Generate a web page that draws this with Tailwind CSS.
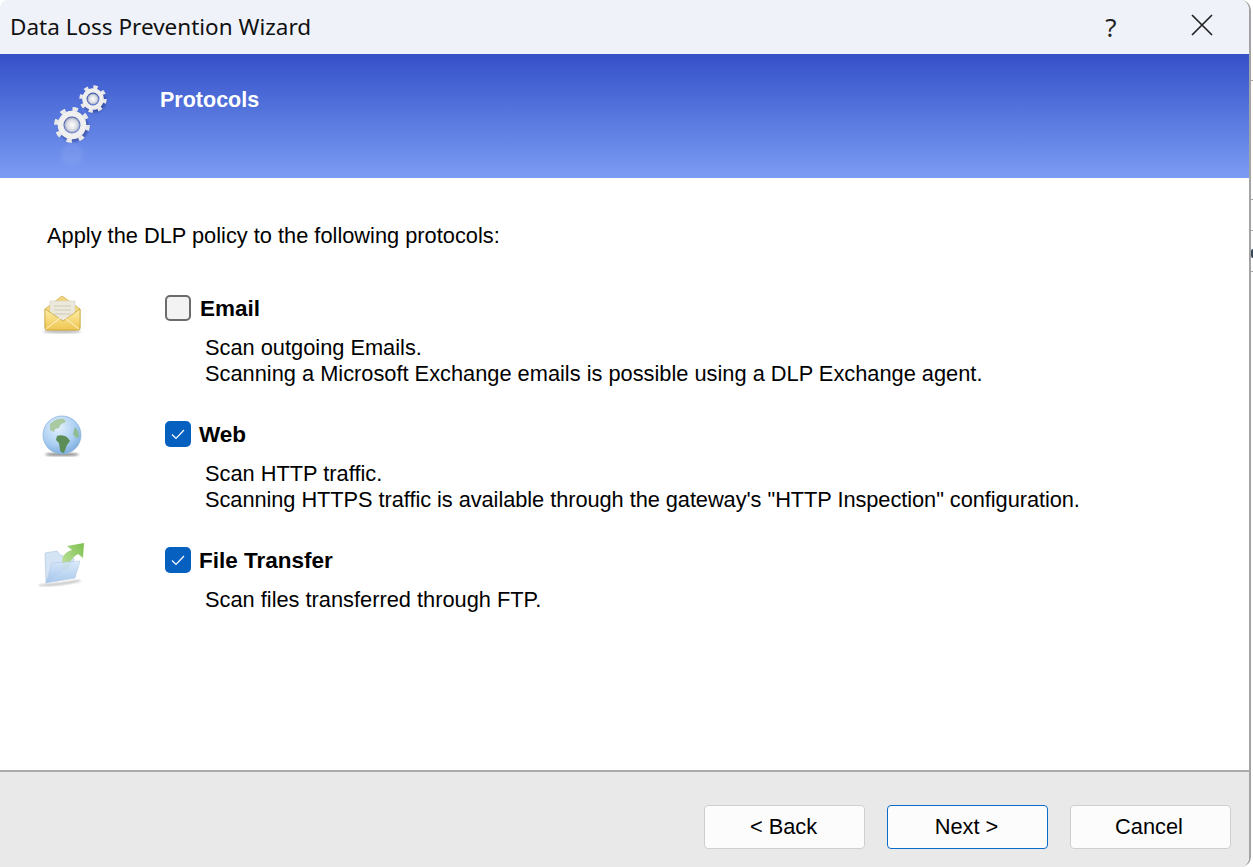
<!DOCTYPE html>
<html lang="en">
<head>
<meta charset="UTF-8">
<title>Data Loss Prevention Wizard</title>
<script src="https://cdn.jsdelivr.net/npm/@tailwindcss/browser@4"></script>
</head>
<body class="bg-white overflow-hidden">
<div class="relative w-[1253px] h-[867px] font-['Liberation_Sans',sans-serif] text-black">
  <!-- bits of the window behind the dialog -->
  <div class="absolute right-0 top-[80px] w-[3px] h-px bg-[#a8a8a8]"></div>
  <div class="absolute right-0 top-[199px] w-[3px] h-px bg-[#a8a8a8]"></div>
  <div class="absolute right-0 top-[230px] w-[3px] h-px bg-[#a8a8a8]"></div>
  <div class="absolute right-0 top-[271px] w-[3px] h-px bg-[#a8a8a8]"></div>
  <div class="absolute right-0 top-[249px] w-[2px] h-[9px] rounded-l-[2px] bg-[#3a4a5c]"></div>

  <div class="relative flex flex-col w-[1251px] h-[867px] overflow-hidden rounded-tl-[8px] rounded-tr-[10px] rounded-br-[10px] border-r-2 border-[#a3a3a3] bg-white">
    <!-- title bar -->
    <div class="flex items-center h-[54px] pl-[10px] bg-[#eff2f9]">
      <span class="flex-1 font-['Noto_Sans',sans-serif] text-[22.5px] leading-[54px] text-[#111]">Data Loss Prevention Wizard</span>
      <span class="w-[24px] text-center font-['Noto_Sans',sans-serif] text-[26px] leading-[50px] text-[#222]">?</span>
      <svg class="ml-[68px] mr-[36px] mb-[4px]" width="22" height="22" viewBox="0 0 22 22" fill="none" stroke="#222" stroke-width="1.7"><path d="M1 1l20 20M21 1L1 21"/></svg>
    </div>

    <!-- banner -->
    <div class="flex h-[124px] bg-gradient-to-b from-[#3650c8] to-[#7c9cf3]">
      <svg class="ml-[48px] mt-[28px]" width="64" height="92" viewBox="0 0 64 92">
        <defs>
          <radialGradient id="hub"><stop offset="0" stop-color="#fff"/><stop offset=".7" stop-color="#d8dae2"/><stop offset="1" stop-color="#8f98b8"/></radialGradient>
          <filter id="soft"><feGaussianBlur stdDeviation="2"/></filter>
          <filter id="gearShadow"><feGaussianBlur stdDeviation="1"/></filter>
        </defs>
        <circle cx="24" cy="72" r="11" fill="#fff" opacity=".07" filter="url(#soft)"/>
        <g opacity=".5" transform="translate(1.5 2)" filter="url(#gearShadow)">
          <circle cx="45" cy="17" r="9" fill="none" stroke="#26367f" stroke-width="5"/>
          <circle cx="24" cy="43" r="12" fill="none" stroke="#26367f" stroke-width="6"/>
        </g>
        <circle cx="45" cy="17" r="12" fill="none" stroke="#e8e8e8" stroke-width="3.4" stroke-dasharray="4.3 5.12"/>
        <circle cx="45" cy="17" r="8.6" fill="none" stroke="#eeeeee" stroke-width="4.4"/>
        <circle cx="45" cy="17" r="5.6" fill="url(#hub)"/>
        <circle cx="24" cy="43" r="16" fill="none" stroke="#e8e8e8" stroke-width="3.8" stroke-dasharray="5.4 7.17"/>
        <circle cx="24" cy="43" r="11.4" fill="none" stroke="#f0f0f0" stroke-width="5.8"/>
        <circle cx="24" cy="43" r="7.8" fill="url(#hub)"/>
      </svg>
      <span class="ml-[48px] mt-[34px] text-[21.5px] leading-6 font-bold text-white">Protocols</span>
    </div>

    <!-- content -->
    <div class="flex-1 pt-[46px] pl-[47px]">
      <p class="text-[21.8px] leading-6">Apply the DLP policy to the following protocols:</p>

      <div class="mt-[49px] flex flex-col">
        <!-- email -->
        <div class="flex h-[126px]">
          <div class="w-[118px] shrink-0">
            <svg class="-ml-[5px] -mt-[3px] w-[42px] h-[42px]" viewBox="0 0 42 42">
              <defs>
                <linearGradient id="env" x1="0" y1="0" x2="0" y2="1"><stop offset="0" stop-color="#ffefa8"/><stop offset="1" stop-color="#eec550"/></linearGradient>
                <filter id="shade"><feGaussianBlur stdDeviation="1.2"/></filter>
              </defs>
              <ellipse cx="20" cy="37.5" rx="19" ry="1.8" fill="#bbb" filter="url(#shade)"/>
              <path d="M3 15L20 2l18 13v19q0 2-2 2H5q-2 0-2-2z" fill="#f3d77e" stroke="#cfae4c" stroke-width=".8"/>
              <path d="M8 7h25v16l-12 6-13-6z" fill="#ece9dc" stroke="#d4d0c0" stroke-width=".6"/>
              <path d="M12 12h17M12 16h17M12 20h17" stroke="#cfcbb8" stroke-width="1"/>
              <path d="M3 15l18 12 17-12v19q0 2-2 2H5q-2 0-2-2z" fill="url(#env)" stroke="#c9a63f" stroke-width=".8"/>
              <path d="M4 35l14-11M37 35L23 24" stroke="#fff6d0" stroke-width="1"/>
            </svg>
          </div>
          <div class="flex flex-col">
            <label class="flex items-center h-[26px] -mt-[2px]">
              <span class="w-[26px] h-[26px] rounded-[5px] border-2 border-[#6b6b6b] bg-[#f3f3f3]"></span>
              <span class="ml-[9px] mt-[2px] text-[22.5px] font-bold">Email</span>
            </label>
            <p class="mt-[14px] ml-[40px] text-[21.8px] leading-[26px]">Scan outgoing Emails.<br>Scanning a Microsoft Exchange emails is possible using a DLP Exchange agent.</p>
          </div>
        </div>

        <!-- web -->
        <div class="flex h-[126px]">
          <div class="w-[118px] shrink-0">
            <svg class="-ml-[6px] -mt-[8px] w-[42px] h-[42px] overflow-visible" viewBox="0 0 42 42">
              <defs>
                <radialGradient id="globe" cx=".4" cy=".3" r=".8"><stop offset="0" stop-color="#e4f1fd"/><stop offset=".6" stop-color="#a9cdf1"/><stop offset="1" stop-color="#6fa3d8"/></radialGradient>
              </defs>
              <ellipse cx="21" cy="39.5" rx="17" ry="1.6" fill="#888" filter="url(#shade)"/>
              <circle cx="21" cy="20" r="19" fill="url(#globe)" stroke="#8fb6da" stroke-width=".8"/>
              <path d="M9 9q6-6 14-5l2 3-5 2-2 4-4 1-1 3-4-2z" fill="#a9c9a0"/>
              <path d="M16 21q5-2 10 1l3 4-3 4-3 8q-3 0-4-3l-1-7-3-3z" fill="#5d8d56"/>
              <path d="M34 12q4 4 4 10l-3 1-3-4z" fill="#8fbc93"/>
            </svg>
          </div>
          <div class="flex flex-col">
            <label class="flex items-center h-[26px] -mt-[2px]">
              <span class="flex items-center justify-center w-[26px] h-[26px] rounded-[5px] bg-[#0560bf]">
                <svg width="14" height="11" viewBox="0 0 14 11" fill="none" stroke="#fff" stroke-width="1.2"><path d="M1 5.5L5 9.5L13 1"/></svg>
              </span>
              <span class="ml-[8px] mt-[2px] text-[22.5px] font-bold">Web</span>
            </label>
            <p class="mt-[14px] ml-[40px] text-[21.8px] leading-[26px]">Scan HTTP traffic.<br><span class="tracking-[-0.06px]">Scanning HTTPS traffic is available through the gateway's "HTTP Inspection" configuration.</span></p>
          </div>
        </div>

        <!-- file transfer -->
        <div class="flex h-[126px]">
          <div class="w-[118px] shrink-0">
            <svg class="-ml-[10px] -mt-[9px] w-[50px] h-[48px]" viewBox="0 0 50 48">
              <defs>
                <linearGradient id="fold" x1="0" y1="0" x2="0" y2="1"><stop offset="0" stop-color="#d6e7fa"/><stop offset="1" stop-color="#9cc0ea"/></linearGradient>
                <linearGradient id="arrow" x1="0" y1="1" x2="1" y2="0"><stop offset="0" stop-color="#c6e4a4"/><stop offset="1" stop-color="#7cc04e"/></linearGradient>
              </defs>
              <path d="M2 45q20-1 40-5l2 1q-20 5-42 5z" fill="#aaa" filter="url(#shade)"/>
              <path d="M8 13l12-2 3 4 14 4-1 4-27 20z" fill="#d5e4f5" stroke="#a9c2df" stroke-width=".6"/>
              <path d="M26 30Q22 13 35 10L30 6L47 3L46 18L41 14Q33 18 31 29z" fill="url(#arrow)"/>
              <path d="M15 23L43 21L38 38L9 43z" fill="url(#fold)" opacity=".85" stroke="#a9c2df" stroke-width=".6"/>
            </svg>
          </div>
          <div class="flex flex-col">
            <label class="flex items-center h-[26px] -mt-[2px]">
              <span class="flex items-center justify-center w-[26px] h-[26px] rounded-[5px] bg-[#0560bf]">
                <svg width="14" height="11" viewBox="0 0 14 11" fill="none" stroke="#fff" stroke-width="1.2"><path d="M1 5.5L5 9.5L13 1"/></svg>
              </span>
              <span class="ml-[8px] mt-[2px] text-[22.5px] font-bold">File Transfer</span>
            </label>
            <p class="mt-[14px] ml-[40px] text-[21.8px] leading-[26px]">Scan files transferred through FTP.</p>
          </div>
        </div>
      </div>
    </div>

    <!-- footer -->
    <div class="flex justify-end gap-[22px] h-[97px] pt-[33px] pr-[18px] border-t-2 border-[#ababab] bg-[#e9e9e9]">
      <button class="w-[161px] h-[44px] pr-[2px] rounded-[4px] border border-[#cfcfcf] bg-[#fcfcfc] text-[21.8px]">&lt; Back</button>
      <button class="w-[161px] h-[44px] pr-[2px] rounded-[4px] border border-[#0a6cc8] bg-[#fcfcfc] text-[21.8px]">Next &gt;</button>
      <button class="w-[161px] h-[44px] pr-[3px] rounded-[4px] border border-[#cfcfcf] bg-[#fcfcfc] text-[21.8px]">Cancel</button>
    </div>
  </div>
</div>
</body>
</html>
